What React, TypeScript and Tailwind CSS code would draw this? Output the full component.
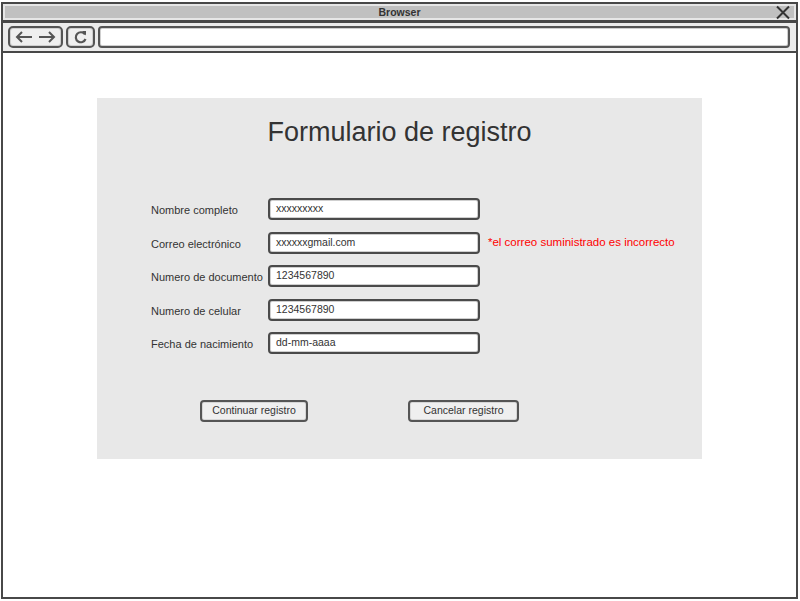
import React from "react";

const font = { fontFamily: '"Liberation Sans", Arial, sans-serif' };

function Field({ label, value }: { label: string; value: string }) {
  return (
    <div className="flex items-center h-[22px]">
      <div className="w-[117px] text-[11px] text-[#333] pt-[3px] whitespace-nowrap">{label}</div>
      <div className="w-[212px] h-[22px] rounded-[4px] border-2 border-[#4a4a4a] bg-white shadow-[inset_0_0_0_1px_#cfcfcf] flex items-center pl-[6px] text-[10.5px] text-[#333]">
        {value}
      </div>
    </div>
  );
}

function Btn({ children, w }: { children: React.ReactNode; w: string }) {
  return (
    <div
      className={`${w} h-[22px] rounded-[4px] border-2 border-[#555] bg-[#efefef] shadow-[inset_0_0_0_1px_#d6d6d6] flex items-center justify-center text-[10.5px] text-[#333]`}
    >
      {children}
    </div>
  );
}

export default function App() {
  return (
    <div className="w-[800px] h-[601px] bg-white pt-[2px] pl-[1px]" style={font}>
      <div className="w-[797px] h-[597px] border-2 border-[#484848] flex flex-col bg-white">
        {/* title bar */}
        <div className="h-[16px] bg-[#c0c0c0] border-2 border-[#e6e6e6] relative flex items-center justify-center">
          <span className="text-[10.5px] font-bold text-[#333] leading-none">Browser</span>
          <svg className="absolute right-[3px] top-[-1px]" width="16" height="15" viewBox="0 0 16 15">
            <path d="M2 1.5 L14 13.5 M14 1.5 L2 13.5" stroke="#333" strokeWidth="2" fill="none" />
          </svg>
        </div>
        <div className="h-[3px] bg-[#484848]" />
        {/* toolbar */}
        <div className="h-[28px] bg-[#ececec] flex items-center gap-[3px] pl-[5px] pr-[6px]">
          <div className="w-[55px] h-[22px] rounded-[5px] border-2 border-[#555] bg-[#efefef] shadow-[inset_0_0_0_1px_#cfcfcf] flex items-center justify-center gap-[5px]">
            <svg width="18" height="12" viewBox="0 0 18 12">
              <path d="M17 6 H2 M7 1 L2 6 L7 11" stroke="#555" strokeWidth="2" fill="none" />
            </svg>
            <svg width="18" height="12" viewBox="0 0 18 12">
              <path d="M1 6 H16 M11 1 L16 6 L11 11" stroke="#555" strokeWidth="2" fill="none" />
            </svg>
          </div>
          <div className="w-[29px] h-[22px] rounded-[5px] border-2 border-[#555] bg-[#efefef] shadow-[inset_0_0_0_1px_#cfcfcf] flex items-center justify-center">
            <svg width="14" height="14" viewBox="0 0 14 14">
              <path d="M11 4.5 A5 5 0 1 0 11.5 9" stroke="#555" strokeWidth="2.2" fill="none" />
              <path d="M8 1 L12 1 L12 5.5 Z" fill="#555" />
            </svg>
          </div>
          <div className="flex-1 h-[22px] rounded-[4px] border-2 border-[#555] bg-white shadow-[inset_0_0_0_1px_#cfcfcf]" />
        </div>
        <div className="h-[2px] bg-[#484848]" />
        {/* content */}
        <div className="flex-1 bg-white pt-[45px] pl-[94px]">
          <div className="w-[605px] h-[361px] bg-[#e8e8e8] flex flex-col">
            <div className="mt-[15px] h-[38px] flex items-center justify-center text-[27px] text-[#333] leading-none">
              Formulario de registro
            </div>
            <div className="mt-[47px] pl-[54px] flex flex-col gap-[11.5px]">
              <Field label="Nombre completo" value="xxxxxxxxx" />
              <div className="flex items-center">
                <Field label="Correo electrónico" value="xxxxxxgmail.com" />
                <span className="ml-[8px] text-[11.5px] text-[#ff0000] whitespace-nowrap">
                  *el correo suministrado es incorrecto
                </span>
              </div>
              <Field label="Numero de documento" value="1234567890" />
              <Field label="Numero de celular" value="1234567890" />
              <Field label="Fecha de nacimiento" value="dd-mm-aaaa" />
            </div>
            <div className="mt-[46px] pl-[103px] flex gap-[100px]">
              <Btn w="w-[108px]">Continuar registro</Btn>
              <Btn w="w-[111px]">Cancelar registro</Btn>
            </div>
          </div>
        </div>
      </div>
    </div>
  );
}
